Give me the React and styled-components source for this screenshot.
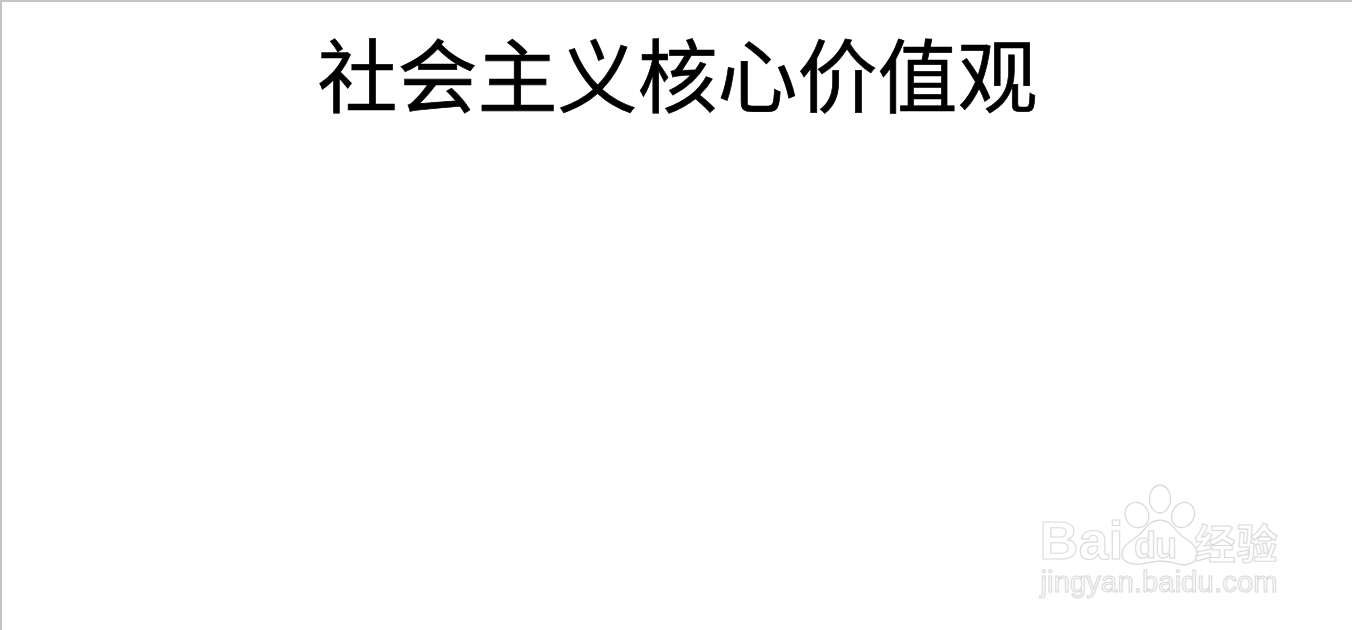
import React from 'react';
import styled, { createGlobalStyle } from 'styled-components';

const GlobalStyle = createGlobalStyle`
  html, body {
    margin: 0;
    padding: 0;
    background: #fff;
  }
`;

const Page = styled.div`
  position: relative;
  box-sizing: border-box;
  width: 1352px;
  height: 630px;
  overflow: hidden;
  background: #fff;
  border-top: 2px solid #c4c4c4;
  border-left: 2px solid #c4c4c4;
`;

const Title = styled.h1`
  margin: 0;
  padding: 11px 0 0 1px;
  text-align: center;
  font-family: "Noto Sans CJK SC", "Liberation Sans", sans-serif;
  font-size: 80px;
  font-weight: 400;
  line-height: 116px;
  color: #000;
  -webkit-text-stroke: 0.7px #000;
`;

const Watermark = styled.div`
  position: absolute;
  left: 1033px;
  top: 482px;
  width: 248px;
  display: flex;
  flex-direction: column;
  align-items: center;
`;

const LogoRow = styled.div`
  display: flex;
  align-items: flex-end;
  height: 84px;
`;

const Outlined = styled.span`
  color: #fff;
  -webkit-text-stroke: 1.1px #dadada;
  white-space: nowrap;
`;

const Bai = styled(Outlined)`
  font-family: "Liberation Sans", sans-serif;
  font-size: 54px;
  font-weight: 700;
  line-height: 56px;
  margin-right: -4px;
`;

const Jing = styled(Outlined)`
  font-family: "Noto Sans CJK SC", sans-serif;
  font-size: 41px;
  font-weight: 700;
  line-height: 54px;
  letter-spacing: 1px;
  margin-left: -5px;
`;

const Domain = styled(Outlined)`
  margin-top: -3px;
  font-family: "Liberation Sans", sans-serif;
  font-size: 29px;
  line-height: 34px;
  letter-spacing: 0.2px;
`;

const PawSvg = styled.svg`
  display: block;
  fill: #fff;
  stroke: #dadada;
  stroke-width: 1.3;
  flex: none;
`;

const PawText = styled.text`
  font-family: "Liberation Sans", sans-serif;
  font-size: 36px;
  font-weight: 700;
  letter-spacing: -1px;
  stroke-width: 1.1;
`;

const Paw = () => (
  <PawSvg width="80" height="84" viewBox="0 0 80 84">
    <ellipse cx="17" cy="31" rx="11.5" ry="13" transform="rotate(-30 17 31)" />
    <ellipse cx="40" cy="15" rx="10.5" ry="14" />
    <ellipse cx="63" cy="31" rx="11" ry="13" transform="rotate(28 63 31)" />
    <path d="M40 36 C51 36 54 46 62 52 C70 58 78 62 77 71 C76 80 66 82 58 80 C51 78 46 77 40 77 C34 77 28 79 21 80 C11 81 2 78 2 70 C2 61 12 57 19 51 C26 45 29 36 40 36 Z" />
    <PawText x="14" y="74">du</PawText>
  </PawSvg>
);

export default function App() {
  return (
    <>
      <GlobalStyle />
      <Page>
        <Title>社会主义核心价值观</Title>
        <Watermark>
          <LogoRow>
            <Bai>Bai</Bai>
            <Paw />
            <Jing>经验</Jing>
          </LogoRow>
          <Domain>jingyan.baidu.com</Domain>
        </Watermark>
      </Page>
    </>
  );
}
